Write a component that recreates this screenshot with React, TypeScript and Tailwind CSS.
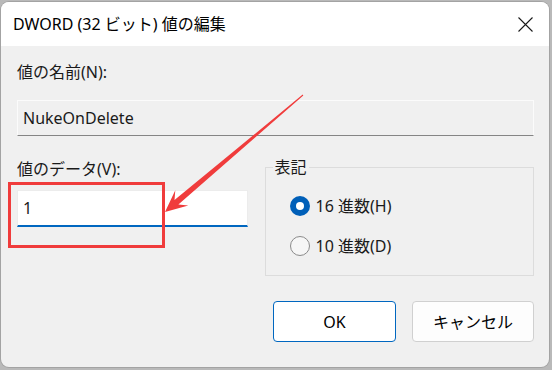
import React from 'react';

const font = "font-['Segoe_UI','Noto_Sans','Noto_Sans_CJK_JP',sans-serif]";

function Radio({ checked, label }: { checked: boolean; label: string }) {
  return (
    <div className="flex items-center h-[20px]">
      {checked ? (
        <div className="w-[20px] h-[20px] rounded-full bg-[#005fb8] flex items-center justify-center">
          <div className="w-[8px] h-[8px] rounded-full bg-white" />
        </div>
      ) : (
        <div className="w-[20px] h-[20px] rounded-full border border-[#8a8a8a] bg-[#f6f6f6]" />
      )}
      <span className="ml-[6px] text-[16px] leading-[22px] text-[#1a1a1a]">{label}</span>
    </div>
  );
}

export default function App() {
  return (
    <div className={`relative w-[552px] h-[370px] overflow-hidden bg-[#b9b9b9] pl-[1px] pt-[2px] ${font}`}>
      {/* Dialog window */}
      <div className="w-[548px] h-[365px] rounded-[8px] overflow-hidden bg-[#f0f0f0] shadow-[0_0_0_1px_#a3a3a3] flex flex-col">
        {/* Title bar */}
        <div className="h-[44px] bg-white flex items-center justify-between pl-[12px] pr-[16px]">
          <span className="text-[16px] text-black">DWORD (32 ビット) 値の編集</span>
          <svg width="15" height="15" viewBox="0 0 15 15">
            <path d="M0.5 0.5 L14.5 14.5 M14.5 0.5 L0.5 14.5" stroke="#1a1a1a" strokeWidth="1.1" fill="none" />
          </svg>
        </div>

        {/* Body */}
        <div className="flex flex-col pl-[16px] pr-[15px] text-[#1a1a1a]">
          <div className="mt-[15px] h-[22px] text-[16px] leading-[22px]">値の名前(N):</div>
          <div className="mt-[17px] h-[36px] bg-[#f0f0f0] border border-[#fbfbfb] border-b-[#858585] flex items-center pl-[5px] text-[16px]">
            NukeOnDelete
          </div>

          <div className="mt-[22px] flex">
            <div className="w-[231px] flex flex-col">
              <div className="h-[22px] text-[16px] leading-[22px]">値のデータ(V):</div>
              <div className="mt-[10px] h-[37px] bg-white border border-[#ececec] border-b-2 border-b-[#0067c0] flex items-center pl-[5px] text-[16px]">
                1
              </div>
            </div>

            <div className="relative ml-[17px] mt-[9px] w-[270px] h-[109px] border border-[#dcdcdc]">
              <span className="absolute left-[7px] -top-[12px] px-[2px] bg-[#f0f0f0] text-[16px] leading-[22px]">
                表記
              </span>
              <div className="pl-[24px] pt-[28px] flex flex-col gap-[20px]">
                <Radio checked label="16 進数(H)" />
                <Radio checked={false} label="10 進数(D)" />
              </div>
            </div>
          </div>

          <div className="mt-[25px] flex justify-end gap-[16px]">
            <button className="w-[123px] h-[41px] rounded-[4px] bg-white border border-[#0067c0] text-[16px] text-black">
              OK
            </button>
            <button className="w-[122px] h-[41px] rounded-[4px] bg-[#fdfdfd] border border-[#d0d0d0] text-[16px] text-black">
              キャンセル
            </button>
          </div>
        </div>
      </div>

      {/* Annotation: red box and arrow */}
      <div className="absolute left-[8px] top-[182px] w-[157px] h-[66px] border-[3px] border-[#f03c3c]" />
      <svg className="absolute left-0 top-0" width="552" height="370" viewBox="0 0 552 370">
        <polygon
          points="165,212 188.3,205.4 178.4,204.6 303.3,95.4 302.7,94.6 174.5,200 175.3,190.2"
          fill="#f03c3c"
        />
      </svg>
    </div>
  );
}
